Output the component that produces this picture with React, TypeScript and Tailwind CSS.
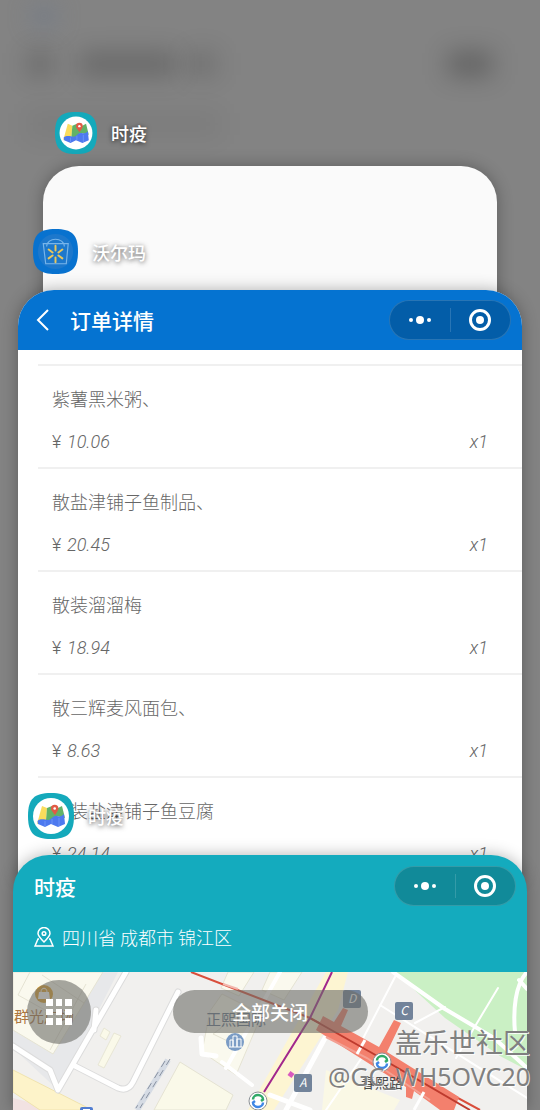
import { ReactNode } from "react";

const orderItems = [
  { name: "紫薯黑米粥、", price: "10.06", count: 1 },
  { name: "散盐津铺子鱼制品、", price: "20.45", count: 1 },
  { name: "散装溜溜梅", price: "18.94", count: 1 },
  { name: "散三辉麦风面包、", price: "8.63", count: 1 },
  { name: "散装盐津铺子鱼豆腐", price: "24.14", count: 1 },
];

function MapAppIcon({ className }: { className: string }) {
  return (
    <svg viewBox="0 0 46 46" className={className} aria-hidden="true">
      <path d="M23 0C40 0 46 6 46 23S40 46 23 46 0 40 0 23 6 0 23 0Z" fill="#14a9bb" />
      <circle cx="23" cy="23" r="18" fill="#fff" />
      <path d="M14 13L19 15L18 28L9 31Z" fill="#fadc5c" />
      <path d="M19 15L24 13L30 15L34 13L37 25L28 23L22 28L18 27Z" fill="#62b267" />
      <path d="M9.5 28C13 25 17 27 20 27C24 27 25 22 29 23C32 24 34 23 36 21L37 31L30 34L23 31L17 34L10 31Z" fill="#4d79ef" />
      <path d="M17 28V33M24 26V31M31 25V33" stroke="#6c94f5" strokeWidth="1" />
      <path d="M27 22C24 18 23 17 23 15.5A3.7 3.7 0 0 1 30.4 15.5C30.4 17 29 19 27 22Z" fill="#e15a45" />
      <circle cx="26.7" cy="15.5" r="1.3" fill="#fff" />
    </svg>
  );
}

function ShopAppIcon({ className }: { className: string }) {
  return (
    <svg viewBox="0 0 46 46" className={className} fill="none" aria-hidden="true">
      <path d="M23 0C40 0 46 6 46 23S40 46 23 46 0 40 0 23 6 0 23 0Z" fill="#0872cf" />
      <circle cx="23" cy="23" r="18" fill="#1d78cc" />
      <path d="M10.5 15H36L34 35.5H13Z" stroke="#78b5ea" strokeWidth="1.2" />
      <path d="M14 18C14 8 32 8 32 18" stroke="#78b5ea" strokeWidth="1.2" />
      <path
        d="M23 17V22M23 29V34M16 21L20 24M26 27L30 30M30 21L26 24M20 27L16 30"
        stroke="#e9c65a"
        strokeWidth="2"
        strokeLinecap="round"
      />
    </svg>
  );
}

function AppLabel({ icon, name }: { icon: ReactNode; name: string }) {
  return (
    <div className="flex items-center gap-[14px] text-white">
      {icon}
      <span className="text-[18px] leading-6 font-medium [text-shadow:0_1px_5px_rgba(0,0,0,0.7)]">{name}</span>
    </div>
  );
}

function Capsule({ className }: { className: string }) {
  return (
    <div className={`flex h-10 w-[122px] items-center rounded-full border border-white/15 ${className}`}>
      <button type="button" aria-label="更多" className="flex h-full flex-1 items-center justify-center gap-[3px]">
        <span className="size-1 rounded-full bg-white" />
        <span className="size-2 rounded-full bg-white" />
        <span className="size-1 rounded-full bg-white" />
      </button>
      <span className="h-6 w-px bg-white/15" />
      <button type="button" aria-label="关闭" className="flex h-full flex-1 items-center justify-center">
        <span className="flex size-[22px] items-center justify-center rounded-full border-3 border-white">
          <span className="size-2 rounded-full bg-white" />
        </span>
      </button>
    </div>
  );
}

function MetroLogo({ x, y }: { x: number; y: number }) {
  return (
    <g transform={`translate(${x} ${y})`} fill="none">
      <circle r="9" fill="#fff" stroke="#8c9196" strokeWidth="1" />
      <path d="M-5 -1.5A5 4.5 0 0 1 5 -1.5L3 0" stroke="#31a968" strokeWidth="2.5" />
      <path d="M5 1.5A5 4.5 0 0 1 -5 1.5L-3 0" stroke="#3f87e5" strokeWidth="2.5" />
    </g>
  );
}

function ExitMark({ x, y, letter }: { x: number; y: number; letter: string }) {
  return (
    <g transform={`translate(${x} ${y})`}>
      <rect x="-9" y="-9" width="18" height="18" rx="2" fill="#72839a" />
      <text textAnchor="middle" y="4" fontSize="12" fontStyle="italic" fill="#fff">
        {letter}
      </text>
    </g>
  );
}

function StreetMap() {
  return (
    <svg
      viewBox="13 972 514 138"
      preserveAspectRatio="xMidYMin slice"
      className="block min-h-[138px] w-full font-['Noto_Sans_CJK_SC',sans-serif]"
      fill="none"
      role="img"
      aria-label="地图"
    >
      <rect x="13" y="972" width="514" height="138" fill="#f1f0ee" />
      {/* blocks */}
      <path d="M13 972H118L58 1090L13 1048Z" fill="#e7e8ea" />
      <path d="M13 972H103L53 1054L13 1030Z" fill="#faf9ee" stroke="#e5e3d3" />
      <path d="M30 972L18 995L70 1024M86 984L50 1050M42 975L84 1003" stroke="#e5e3d3" />
      <path d="M13 1098L58 1110H13Z" fill="#f2e2e2" />
      <path d="M104 1028L110 1032L106 1040L100 1036ZM114 1033L121 1036L104 1068L98 1065Z" fill="#faf9e9" stroke="#e8e6d5" />
      <path d="M228 972H254L239 996L221 988ZM210 1011L222 994L262 1014L236 1075L202 1052Z" fill="#faf9ee" stroke="#e5e3d3" />
      <path d="M221 1028L231 1012L250 1021L238 1046L213 1034Z" stroke="#e5e3d3" />
      <path d="M180 1062L233 1095L226 1110H154Z" fill="#faf9e9" stroke="#e5e3d3" />
      <path d="M270 972H302L284 1000L262 990Z" fill="#faf9ee" stroke="#e5e3d3" />
      <path d="M326 1070L400 1100L394 1110H322Z" fill="#faf8e5" />
      <path d="M395 972H527V1070L500 1056L445 1018Z" fill="#caf0c4" />
      {/* main roads */}
      <path d="M13 1070L92 1110H40L13 1092Z" fill="#fdf3c9" stroke="#f0e3ae" />
      <path d="M326 972L248 1110H274L338 1010L348 972Z" fill="#fdf5d2" />
      <g stroke="#dcdcdc" strokeWidth="7" strokeLinecap="round" strokeLinejoin="round">
        <path d="M126 972L58 1090L50 1070L13 1046M75 1066L118 1088Q128 1092 133 1082L178 992M96 1010L94 1030" />
      </g>
      <g stroke="#fff" strokeLinecap="round" strokeLinejoin="round">
        <path d="M126 972L58 1090L50 1070L13 1046M75 1066L118 1088Q128 1092 133 1082L178 992M96 1010L94 1030" strokeWidth="5" />
        <path d="M201 1038L202 1054L216 1056M325 1038L286 1110M270 1095L310 1110" strokeWidth="5" />
        <path d="M222 1062L252 1085M280 972L226 1068M393 972L445 1009L494 1038L527 1068M527 972C515 985 513 1010 515 1032M519 980L527 989" strokeWidth="4" />
        <path d="M395 977L357 1050M498 988L456 1058M445 1007L415 1023M380 1005L527 1098M365 1053L326 1110" strokeWidth="2" />
      </g>
      <path d="M168 1060L137 1110" stroke="#d5dbe4" strokeWidth="6" />
      <path d="M170 1059L140 1108M165 1061L136 1108" stroke="#8992a1" strokeWidth="1" strokeDasharray="7 6" />
      {/* metro lines and station */}
      <path d="M191 972L310 1018L480 1110" stroke="#d94e3b" strokeWidth="2" />
      <path d="M223 984L238 989" stroke="#f3b8ae" strokeWidth="2" />
      <path d="M323 1016L334 1022L343 1008L348 1010L341 1026L379 1047L394 1020L401 1023L387 1052L459 1097L454 1110H440L414 1091L412 1099L406 1097L406 1087L316 1030Z" fill="#f3806d" />
      <path d="M326 1037L367 1058L430 1100" stroke="#f3a093" strokeWidth="2" />
      <path d="M365 1040L357 1054M424 1092L414 1110" stroke="#fff" strokeWidth="3" />
      <path d="M310 1018L372 1053L470 1110" stroke="#be3a2d" strokeWidth="2" />
      <path d="M332 972L310 1018L264 1092" stroke="#a2278c" strokeWidth="2" />
      <path d="M289 1073L293 1076" stroke="#d95abf" strokeWidth="5" />
      <MetroLogo x={258} y={1101} />
      <MetroLogo x={382} y={1062} />
      <ExitMark x={352} y={999} letter="D" />
      <ExitMark x={404} y={1011} letter="C" />
      <ExitMark x={303} y={1083} letter="A" />
      {/* places */}
      <circle cx="44" cy="994" r="9" fill="#dfa02c" />
      <path d="M39 992H49L50 999H38Z" fill="#fff" />
      <path d="M41 992C41 987 47 987 47 992" stroke="#fff" />
      <text x="14" y="1022" fontSize="15" fill="#ad7741">群光广场</text>
      <text x="206" y="1025" fontSize="15" fill="#62738b">正熙国际</text>
      <circle cx="235" cy="1042" r="9" fill="#7b9cc5" />
      <path d="M230 1047V1040H233V1047M233 1047V1036H237V1047M237 1047V1039H241V1047M229 1047H242" stroke="#fff" />
      <rect x="80" y="1107" width="13" height="8" rx="2" fill="#527ed1" />
      <path d="M83 1110H90" stroke="#fff" strokeWidth="2" />
      <text x="361" y="1088" fontSize="14" fill="#4b4b4b">春熙路</text>
    </svg>
  );
}

function BlurredBackdrop() {
  return (
    <div aria-hidden="true" className="absolute inset-0 -z-10 overflow-hidden bg-[#838383]">
      <div className="flex h-8 items-center px-8">
        <span className="h-5 w-6 rounded-full bg-[#65758c]/60 blur-md" />
      </div>
      <div className="mt-5 flex items-center pr-12 pl-7">
        <span className="h-6 w-6 bg-black/20 blur-md" />
        <span className="ml-7 h-6 w-24 bg-black/20 blur-md" />
        <span className="ml-3 h-6 w-7 bg-black/15 blur-md" />
        <span className="ml-auto h-6 w-11 bg-black/25 blur-md" />
      </div>
      <div className="mx-7 mt-9 h-6 w-48 bg-black/5 blur-md" />
    </div>
  );
}

export default function App() {
  return (
    <main className="relative isolate flex min-h-screen flex-col overflow-hidden font-['Noto_Sans_CJK_SC',sans-serif]">
      <BlurredBackdrop />

      <div className="px-[55px] pt-28 pb-3">
        <AppLabel icon={<MapAppIcon className="size-[42px]" />} name="时疫" />
      </div>

      <section className="mx-[43px] h-44 rounded-t-[36px] bg-[#fafafa] shadow-[0_0_16px_rgba(0,0,0,0.3)]" />

      <section className="relative mx-[18px] -mt-[52px] rounded-t-[36px] bg-white shadow-[0_0_16px_rgba(0,0,0,0.3)]">
        <div className="absolute -top-[61px] left-[15px]">
          <AppLabel icon={<ShopAppIcon className="size-[45px]" />} name="沃尔玛" />
        </div>
        <header className="flex h-[60px] items-center rounded-t-[36px] bg-[#0573d1] pr-[11px] pl-[18px] text-white">
          <button type="button" aria-label="返回">
            <svg viewBox="0 0 14 24" className="h-6 w-[14px]" fill="none" stroke="currentColor" strokeWidth="2">
              <path d="M12 2L2 12L12 22" />
            </svg>
          </button>
          <h1 className="ml-5 text-[21px] leading-7 font-medium">订单详情</h1>
          <Capsule className="ml-auto bg-[#035da8]" />
        </header>
        <ul className="pt-[14px] pl-5 text-[18px] leading-6 font-light text-[#666666]">
          {orderItems.map((item) => (
            <li key={item.name} className="border-t-2 border-[#f0f0f0] pt-5 pr-[34px] pb-[13px] pl-[14px]">
              <p>{item.name}</p>
              <div className="mt-5 flex font-[Roboto,'Noto_Sans_CJK_SC',sans-serif] italic">
                <span className="w-[15px] not-italic">¥</span>
                <span>{item.price}</span>
                <span className="ml-auto">x{item.count}</span>
              </div>
            </li>
          ))}
        </ul>
      </section>

      <section className="relative mx-[13px] -mt-[24px] grow rounded-t-[36px] bg-[#14abbe] shadow-[0_0_16px_rgba(0,0,0,0.3)]">
        <div className="absolute -top-[62px] left-[15px]">
          <AppLabel icon={<MapAppIcon className="size-[46px]" />} name="时疫" />
        </div>
        <header className="pt-[11px] pr-[11px] pl-[21px] text-white">
          <div className="flex items-center justify-between">
            <h2 className="text-[21px] leading-7 font-medium">时疫</h2>
            <Capsule className="bg-[#118a99]" />
          </div>
          <p className="flex items-center gap-2 pt-[19px] pb-[23px] text-[18px] leading-6 font-light">
            <svg viewBox="0 0 20 20" className="size-5" fill="none" stroke="currentColor" strokeWidth="1.5">
              <path d="M10 15C5 10 4 8.5 4 6.5A6 6 0 0 1 16 6.5C16 8.5 15 10 10 15Z" />
              <circle cx="10" cy="6.5" r="1.8" />
              <path d="M5 12H4L1 19H19L16 12H15" />
            </svg>
            四川省 成都市 锦江区
          </p>
        </header>
        <div className="relative">
          <StreetMap />
          <button
            type="button"
            aria-label="应用列表"
            className="absolute top-2 left-[14px] flex size-16 items-center justify-center rounded-full bg-[#6c6c68]/60"
          >
            <svg viewBox="0 0 26 26" className="size-[26px]" fill="#fff">
              <path d="M0 0H7V7H0ZM10 0H16V7H10ZM19 0H26V7H19ZM0 10H7V16H0ZM10 10H16V16H10ZM19 10H26V16H19ZM0 19H7V26H0ZM10 19H16V26H10ZM19 19H26V26H19Z" />
            </svg>
          </button>
          <div className="absolute inset-x-0 top-[18px] flex justify-center">
            <button
              type="button"
              className="h-[43px] w-[195px] rounded-full bg-[#6c6c68]/60 text-[19px] leading-6 font-medium text-white"
            >
              全部关闭
            </button>
          </div>
          <div className="absolute top-[52px] -right-[3px] text-right whitespace-nowrap text-[#808080] [text-shadow:1px_1px_0_rgba(255,255,255,0.8)]">
            <p className="text-[27px] leading-9">盖乐世社区</p>
            <p className="font-['Noto_Sans',sans-serif] text-[25px] leading-8">@GC_WH5OVC20</p>
          </div>
        </div>
      </section>
    </main>
  );
}
